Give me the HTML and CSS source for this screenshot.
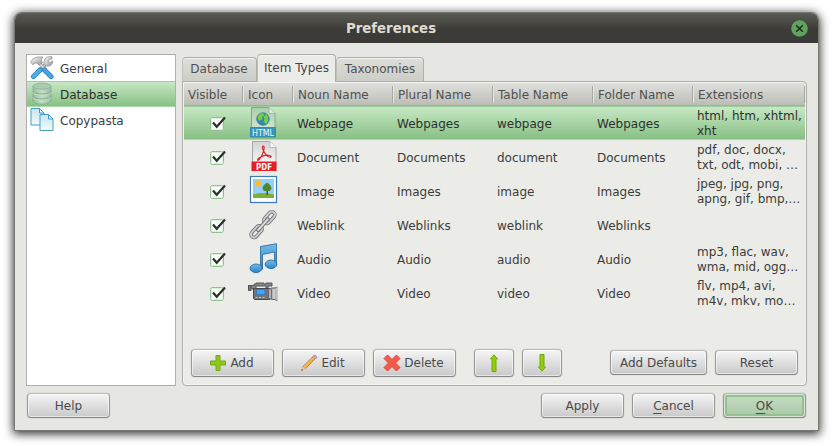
FILE: index.html
```
<!DOCTYPE html>
<html lang="en">
<head>
<meta charset="utf-8">
<title>Preferences</title>
<link rel="stylesheet" href="styles.css">
</head>
<body>
<svg class="defs" width="0" height="0" aria-hidden="true">
  <defs>
    <linearGradient id="metal" x2="1" y2="1"><stop offset="0" stop-color="#fff"/><stop offset="1" stop-color="#929296"/></linearGradient>
    <linearGradient id="blue" x2="0" y2="1"><stop offset="0" stop-color="#79b9e7"/><stop offset="1" stop-color="#2585ca"/></linearGradient>
    <linearGradient id="sheet" x2="0" y2="1"><stop offset="0" stop-color="#c8e5f1"/><stop offset="1" stop-color="#f2fafc"/></linearGradient>
    <linearGradient id="page" x2="0" y2="1"><stop offset="0" stop-color="#d4d4d6"/><stop offset="1" stop-color="#fff"/></linearGradient>
    <linearGradient id="greenpage" x2="0" y2="1"><stop offset="0" stop-color="#accdac"/><stop offset="1" stop-color="#dcecdd"/></linearGradient>
    <linearGradient id="disk"><stop offset="0" stop-color="#9abfa3"/><stop offset=".5" stop-color="#c3dfc5"/><stop offset="1" stop-color="#9abea2"/></linearGradient>
    <linearGradient id="pencil" x2="1" y2="1"><stop offset="0" stop-color="#ffd58b"/><stop offset="1" stop-color="#ef8d18"/></linearGradient>
    <symbol id="check" viewBox="0 0 18 18">
      <rect x="1.5" y="2.5" width="13" height="13" rx="2" fill="#fafffa" stroke="#93bf93"/>
      <rect x="2.5" y="3.5" width="11" height="11" rx="1" fill="none" stroke="#daf0da"/>
      <path d="M4 7.500l3.700 4.200L16 2.500" fill="none" stroke="#303030" stroke-width="2.3"/>
    </symbol>
  </defs>
</svg>
<div class="window">
  <header class="titlebar"><h1>Preferences</h1>
    <button class="close" aria-label="Close"><svg width="17" height="17" viewBox="0 0 17 17"><circle cx="8.5" cy="8.5" r="8.3" fill="#5fa35f"/><path d="M5.2 5.2l6.6 6.6m0-6.6l-6.6 6.6" stroke="#1d291b" stroke-width="1.5"/></svg></button>
  </header>
  <main class="content">
    <div class="panels">
      <nav class="sidebar">
        <div class="nav-item">
          <svg width="24" height="24" viewBox="0 0 24 24"><path d="M15.500 8.500L9 15" stroke="#88888b" stroke-width="3.500"/><path d="M15.500 8.500L9 15" stroke="#ddd" stroke-width="2"/><path d="M14 8.500C13.500 4 15.500 .8 19 .8h3v2.400h-3l-1 2 2 1.300 2.800-1.500c0 3.500-2.500 5.500-6 5z" fill="url(#metal)" stroke="#929296" stroke-width=".8"/><path d="M9 7l7 7" stroke="#88888b" stroke-width="2.800"/><path d="M9 7l7 7" stroke="#e8e8e8" stroke-width="1.500"/><path d="M1 6.500c0-3 4-5.500 8-5.500h4l-2 3 1.500 2.500-3.500 2.500-2-2-3 .2-1 1.700z" fill="url(#metal)" stroke="#929296" stroke-width=".8"/><path d="M14.500 14l6.500 6.500" stroke="#2a7fc0" stroke-width="5" stroke-linecap="round"/><path d="M14.500 14l6.500 6.500" stroke="#46a5e3" stroke-width="3.500" stroke-linecap="round"/><path d="M3.500 20.500L10 14" stroke="#2a7fc0" stroke-width="5" stroke-linecap="round"/><path d="M3.500 20.500L10 14" stroke="#50aee9" stroke-width="3.500" stroke-linecap="round"/></svg>
          <span>General</span>
        </div>
        <div class="nav-item selected">
          <svg width="24" height="24" viewBox="0 0 24 24"><path d="M3 4v15c0 4 18 4 18 0V4" fill="url(#disk)" stroke="#86ab91" stroke-width=".8"/><ellipse cx="12" cy="4.200" rx="9" ry="3" fill="#a9cbb0" stroke="#8aae94" stroke-width=".8"/><path d="M3 9c0 4 18 4 18 0M3 14c0 4 18 4 18 0" fill="none" stroke="#85aa91"/><path d="M3 10.200c0 4 18 4 18 0M3 15.200c0 4 18 4 18 0" fill="none" stroke="#cce5ce" stroke-width=".7"/></svg>
          <span>Database</span>
        </div>
        <div class="nav-item">
          <svg width="24" height="24" viewBox="0 0 24 24"><path d="M1 .5h8.500L14 5v12H1z" fill="url(#sheet)" stroke="#489fc3"/><path d="M9.500 .5v4.500H14z" fill="#eefaff" stroke="#349dce"/><path d="M10 6.500h8.500L23 11v11.500H10z" fill="url(#sheet)" stroke="#489fc3"/><path d="M18.500 6.500v4.500H23z" fill="#eefaff" stroke="#349dce"/></svg>
          <span>Copypasta</span>
        </div>
      </nav>
      <section class="preferences">
        <div class="tabs"><div class="tab">Database</div><div class="tab active">Item Types</div><div class="tab">Taxonomies</div></div>
        <div class="pane">
          <div class="table">
            <div class="row head"><span>Visible</span><span>Icon</span><span>Noun Name</span><span>Plural Name</span><span>Table Name</span><span>Folder Name</span><span>Extensions</span></div>
            <div class="row selected">
              <svg class="check"><use href="#check"/></svg>
              <svg class="type" viewBox="0 0 32 32"><path d="M4.500 .5H22l6 6V29H4.500z" fill="url(#greenpage)" stroke="#87a58c"/><path d="M22 .5v6h6" fill="#dcebdc" stroke="#9eb8a1"/><circle cx="16" cy="12" r="6.300" fill="#3289b4" stroke="#2b7f98" stroke-width=".7"/><path d="M11.500 8l3-2 3 1-1 2-2 1 1 2-3 2-2-3zm8-1l2 3-1 2 1 1-2 4-3-2 1-3-1-2z" fill="#7acb3d"/><path d="M3.500 20.500h25v9.500h-25z" fill="#3b94b6" stroke="#368aac"/><text x="5" y="29" textLength="22" lengthAdjust="spacingAndGlyphs" class="badge-html">HTML</text></svg>
              <span>Webpage</span><span>Webpages</span><span>webpage</span><span>Webpages</span><span class="ext">html, htm, xhtml,<br>xht</span>
            </div>
            <div class="row">
              <svg class="check"><use href="#check"/></svg>
              <svg class="type" viewBox="0 0 32 32"><path d="M5.500 .5H23l6 6v22H5.500z" fill="url(#page)" stroke="#a7a7aa"/><path d="M23 .5v6h6" fill="#fff" stroke="#b7b7bb"/><path d="M16.500 5c-3 0 1 8.500 4.500 10.500 3 1.500 4.500-.5 1.500-1-4-1-9 1-11 3-2 2-.5 2.500 1 .5 3-3.500 6-12 4-13z" fill="none" stroke="#d8272b" stroke-width="1.200"/><path d="M4.500 20.500h25V30h-25z" fill="#e42026"/><text x="9" y="28.800" textLength="16" lengthAdjust="spacingAndGlyphs" class="badge-pdf">PDF</text></svg>
              <span>Document</span><span>Documents</span><span>document</span><span>Documents</span><span class="ext">pdf, doc, docx,<br>txt, odt, mobi, …</span>
            </div>
            <div class="row">
              <svg class="check"><use href="#check"/></svg>
              <svg class="type" viewBox="0 0 32 32"><rect x="3.500" y="1.500" width="26" height="26" fill="#fff" stroke="#3a79b4" stroke-width="1.200"/><path d="M6 4h21v19H6z" fill="#91d0fc"/><circle cx="11" cy="8.500" r="3.200" fill="#ffbd27"/><path d="M6 19.500q10-3 21 0V23H6z" fill="#7bb131"/><path d="M19.500 13h1.500v7h-1.500z" fill="#67401f"/><path d="M20 7.500q4.500 3 4.500 6l-1.500 2.500h-6L15.500 13.500q0-3 4.500-6z" fill="#53852d"/></svg>
              <span>Image</span><span>Images</span><span>image</span><span>Images</span><span class="ext">jpeg, jpg, png,<br>apng, gif, bmp,…</span>
            </div>
            <div class="row">
              <svg class="check"><use href="#check"/></svg>
              <svg class="type" viewBox="0 0 32 32"><g fill="none" stroke-linecap="round"><g transform="rotate(-48 16 16)"><rect x="0" y="12.700" width="13.500" height="6" rx="3" stroke="#707074" stroke-width="3.600"/><rect x="19" y="12.700" width="13.500" height="6" rx="3" stroke="#707074" stroke-width="3.600"/><rect x="0" y="12.700" width="13.500" height="6" rx="3" stroke="#cfcfd1" stroke-width="1.900"/><rect x="19" y="12.700" width="13.500" height="6" rx="3" stroke="#cfcfd1" stroke-width="1.900"/><path d="M9 15.700h14.500" stroke="#66666a" stroke-width="3.800"/><path d="M9 15.700h14.500" stroke="#ddd" stroke-width="2"/></g></g></svg>
              <span>Weblink</span><span>Weblinks</span><span>weblink</span><span>Weblinks</span><span class="ext"></span>
            </div>
            <div class="row">
              <svg class="check"><use href="#check"/></svg>
              <svg class="type" viewBox="0 0 32 32"><g fill="url(#blue)" stroke="#236499" stroke-width=".8"><path d="M13.500 3.500L29.500 .7V21.500h-2V9l-12 2.500V26h-2z"/><ellipse cx="9" cy="25.300" rx="6" ry="4.300"/><ellipse cx="24" cy="21.300" rx="5.800" ry="4.300"/></g></svg>
              <span>Audio</span><span>Audio</span><span>audio</span><span>Audio</span><span class="ext">mp3, flac, wav,<br>wma, mid, ogg…</span>
            </div>
            <div class="row">
              <svg class="check"><use href="#check"/></svg>
              <svg class="type" viewBox="0 0 32 32"><path d="M1.500 8.500H7V7h2V6h8v1h2V6h6v3h-4v2h-2V9H9v3H5v-1H1.500z" fill="#858587" stroke="#58585a"/><path d="M1.500 8.500H4v5H1.500z" fill="#777779" stroke="#505053"/><path d="M6.500 11.500h16v11h-15l-1-1z" fill="#747579" stroke="#49494b"/><path d="M9.500 12.500h8.500v5H9.500z" fill="#48a4f7" stroke="#3979b5"/><path d="M21.500 12.500l3-1.500H28l2-1v13.500l-2-1h-3.500L21.500 21z" fill="#b5b5b8" stroke="#656568"/><path d="M24.500 11.500v10.500" stroke="#707074"/><path d="M27 12v10M30 10.500v12.500" stroke="#d9d9dc" stroke-width="1.300"/><path d="M8.500 20.500h2m1.500 0h2m1.500 0h2" stroke="#c3c3c5"/></svg>
              <span>Video</span><span>Video</span><span>video</span><span>Video</span><span class="ext">flv, mp4, avi,<br>m4v, mkv, mo…</span>
            </div>
          </div>
          <div class="actions">
            <button class="button tall"><svg width="18" height="18" viewBox="0 0 18 18"><path d="M7 1.500h4V7h5.500v4H11v5.500H7V11H1.500V7H7z" fill="#8fc818" stroke="#6cab16"/></svg>Add</button>
            <button class="button tall"><svg width="18" height="18" viewBox="0 0 18 18"><path d="M2 16l1.500-4L14 1.500l2.200 2.200L6 14.200z" fill="url(#pencil)" stroke="#b87524" stroke-width=".8"/><path d="M1 17l2-4 2.500 2z" fill="#eed2a0"/><path d="M1 17l1-2 1 1z" fill="#333"/><path d="M13 2.500L14.500 1q2 .5 2.500 2.500l-1.500 1.500z" fill="#d8a5d5" stroke="#9c7098" stroke-width=".6"/></svg>Edit</button>
            <button class="button tall"><svg width="18" height="18" viewBox="0 0 18 18"><path d="M4.500 1L9 5.500 13.500 1 17 4.500 12.500 9l4.500 4.500-3.500 3.500L9 12.500 4.500 17 1 13.500 5.500 9 1 4.500z" fill="#f35b4a" stroke="#db4435"/></svg>Delete</button>
            <button class="button tall arrow" aria-label="Move up"><svg width="18" height="18" viewBox="0 0 18 18"><path d="M9 .8L12.500 5H11v12.500H7V5H5.500z" fill="#94ce09" stroke="#6aab0b"/></svg></button>
            <button class="button tall arrow" aria-label="Move down"><svg width="18" height="18" viewBox="0 0 18 18"><path d="M7 .5h4V13h1.500L9 17.200 5.500 13H7z" fill="#94ce09" stroke="#6aab0b"/></svg></button>
            <button class="button defaults">Add Defaults</button><button class="button">Reset</button>
          </div>
        </div>
      </section>
    </div>
    <footer class="dialog-actions"><button class="button help">Help</button><button class="button">Apply</button><button class="button"><span><u>C</u>ancel</span></button><button class="button ok"><span><u>O</u>K</span></button></footer>
  </main>
</div>
</body>
</html>
```
FILE: styles.css
```
* { box-sizing: border-box; }
body {
  margin: 0;
  padding: 13px 15px 0;
  height: 446px;
  overflow: hidden;
  background: #fff;
  color: #3c3c3c;
  font: 12px "DejaVu Sans", sans-serif;
}
svg { display: block; flex: none; }
.defs { position: absolute; }
.window {
  width: 803px;
  height: 417px;
  border-radius: 7px 7px 0 0;
  background: #e6e7e2;
  box-shadow: 0 0 0 1px #767672, 0 2px 10px 2px rgba(0,0,0,.8);
}
.titlebar {
  display: grid;
  grid-template-columns: 1fr 17px;
  align-items: center;
  height: 30px;
  padding: 0 10px 0 27px;
  border-radius: 7px 7px 0 0;
  background: linear-gradient(#5b5b55, #3c3b37 55%);
}
.titlebar h1 {
  margin: 0;
  padding: 1px 51px 0 0;
  color: #dedbd2;
  font-size: 13.333px;
  line-height: 29px;
  text-align: center;
}
.close { padding: 0; border: 0; background: none; }
.content { padding: 11px 11px 0 11px; }
.panels { display: flex; gap: 6px; height: 332px; }
.sidebar { flex: none; width: 150px; border: 1px solid #afb0a9; background: #fff; }
.nav-item { display: flex; align-items: center; gap: 6px; height: 26px; padding: 1px 0 0 3px; }
.nav-item.selected, .row.selected {
  border-top: 1px solid #9bce9b;
  border-bottom: 1px solid #a9d8a9;
  background: linear-gradient(#c7e8c5, #87c084);
  color: #303030;
}
.nav-item svg { margin-top: -1px; }
.preferences { flex: none; width: 625px; }
.tabs { display: flex; align-items: flex-end; height: 28px; }
.tab {
  width: 75px;
  height: 25px;
  padding-right: 1px;
  border: 1px solid #afafa9;
  border-left-color: #c0c0b9;
  border-radius: 4px 4px 0 0;
  box-shadow: inset 0 1px #f3f3ef;
  background: linear-gradient(#dedfda, #cccdc7);
  color: #505050;
  line-height: 22px;
  text-align: center;
}
.tab:last-child { width: 88px; padding-right: 0; }
.tab.active { position: relative; z-index: 1; width: 79px; height: 28px; padding-right: 0; line-height: 26px; border-bottom: 0; background: #ebece7; color: #444; }
.pane { height: 305px; margin-top: -1px; border: 1px solid #aeaea9; border-radius: 0 4px 4px 4px; background: #ebece7; box-shadow: inset 0 0 0 1px #f4f5f1; }
.table { height: 261px; padding: 1px 1px 0; }
.row { display: grid; grid-template-columns: 59px 50px 100px 100px 100px 100px 112px; align-items: center; height: 34px; }
.row > span { padding-left: 4px; }
.row .ext { line-height: 15px; white-space: nowrap; align-self: start; padding-top: 3px; }
.row.selected .ext { padding-top: 2px; }
.head { height: 23px; background: linear-gradient(#dfe0dc, #bdbdb7); border-bottom: 1px solid #aaa; color: #505050; }
.head > span { height: 17px; padding-left: 5px; line-height: 18px; border-right: 1px solid #a9a9a3; box-shadow: 1px 0 #e8e8e4; }
.head > span:first-child { padding-left: 4px; }
.row:not(.head) > span:not(.ext) { padding-top: 1px; }
.check { width: 18px; height: 18px; margin: 2px 0 0 25px; }
.type { width: 32px; height: 32px; margin-left: 4px; }
.badge-html { font: 9.5px "DejaVu Sans", sans-serif; fill: #eff; }
.badge-pdf { font: bold 9px "DejaVu Sans", sans-serif; fill: #fff; }
.actions { display: flex; align-items: center; gap: 8px; height: 41px; padding: 0 8px; margin-top: -1px; }
.button {
  display: flex;
  align-items: center;
  justify-content: center;
  gap: 3px;
  flex: none;
  width: 83px;
  height: 25px;
  padding: 0;
  border: 1px solid #999;
  border-top-color: #bbb;
  border-bottom-color: #858585;
  border-radius: 4px;
  background: linear-gradient(#f5f5f5, #c9c9c9);
  box-shadow: inset 0 0 0 1px rgba(255,255,255,.55), 0 0 1px #999;
  color: #4b4b4b;
  font: inherit;
}
.tall { height: 28px; padding-right: 2px; }
.arrow { width: 40px; padding-right: 1px; }
.arrow:nth-child(4) { margin-left: 10px; }
.defaults { width: 97px; margin-left: auto; }
.button u { text-underline-offset: 3px; text-decoration-thickness: 1px; }
.dialog-actions { display: flex; gap: 8px; padding: 7px 1px 0 1px; }
.help { margin-right: auto; }
.ok { background: linear-gradient(#c7ddc5, #a9c8a6); box-shadow: inset 0 0 0 1px #d8e5d6, inset 0 0 0 3px #95c192, 0 0 1px #888; }
```
